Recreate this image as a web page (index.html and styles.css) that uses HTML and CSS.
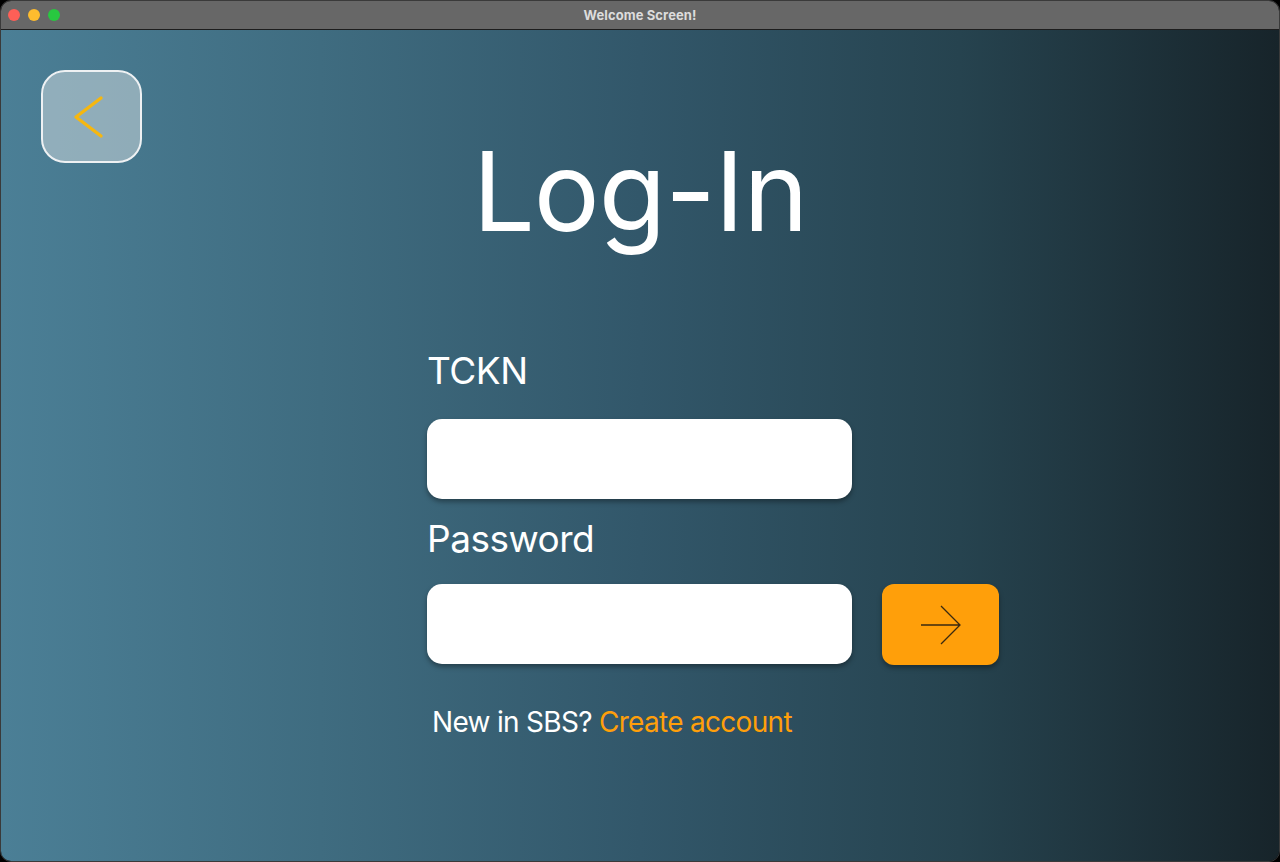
FILE: index.html
```html
<!DOCTYPE html>
<html>
<head>
<meta charset="utf-8">
<title>Welcome Screen!</title>
<link rel="stylesheet" href="styles.css">
</head>
<body>
<div class="window">
  <div class="titlebar">
    <div class="lights">
      <span class="light red"></span>
      <span class="light yellow"></span>
      <span class="light green"></span>
    </div>
    <div class="title">Welcome Screen!</div>
  </div>
  <div class="content">
    <div class="topbar">
      <button class="back" aria-label="Back">
        <svg width="34" height="44" viewBox="0 0 34 44"><polyline points="29,3 4,22 29,41" fill="none" stroke="#f6b70f" stroke-width="3.4" stroke-linecap="round" stroke-linejoin="round"/></svg>
      </button>
    </div>
    <h1 class="heading">Log-In</h1>
    <div class="form">
      <label class="label">TCKN</label>
      <div class="row"><div class="input"></div></div>
      <label class="label label-pw">Password</label>
      <div class="row">
        <div class="input"></div>
        <button class="go" aria-label="Submit">
          <svg width="42" height="40" viewBox="0 0 42 40"><path d="M1 20 H40 M21 1 L40 20 L21 39" fill="none" stroke="#3a2a10" stroke-width="1.3" stroke-linejoin="miter"/></svg>
        </button>
      </div>
      <p class="signup">New in SBS? <span class="link">Create account</span></p>
    </div>
  </div>
</div>
</body>
</html>
```

FILE: styles.css
```css
html, body {
  margin: 0;
  padding: 0;
  background: #000;
  height: 862px;
  overflow: hidden;
}
.window {
  width: 1280px;
  height: 862px;
  border-radius: 11px;
  overflow: hidden;
  display: flex;
  flex-direction: column;
  font-family: Inter, "Liberation Sans", sans-serif;
  box-sizing: border-box;
  border: 1px solid #3a3a3a;
}
.titlebar {
  height: 28px;
  background: #676767;
  position: relative;
  display: flex;
  align-items: center;
  justify-content: center;
  border-bottom: 1px solid #1d1d1d;
  flex-shrink: 0;
}
.lights {
  position: absolute;
  left: 7px;
  top: 8px;
  display: flex;
  gap: 8px;
}
.light {
  width: 12px;
  height: 12px;
  border-radius: 50%;
  display: block;
}
.red { background: #fe5f57; }
.yellow { background: #febc2e; }
.green { background: #28c840; }
.title {
  color: #dcdcdc;
  font-size: 13px;
  font-weight: 700;
  letter-spacing: 0.1px;
}
.content {
  flex: 1;
  background: linear-gradient(90deg, #4b7f96 0%, #3f6c80 25%, #32576a 50%, #26434f 75%, #17242a 100%);
  position: relative;
}
.topbar {
  padding: 40px 0 0 40px;
  height: 92px;
}
.back {
  width: 101px;
  height: 93px;
  box-sizing: border-box;
  border: 2px solid #eef1f3;
  border-radius: 24px;
  background: rgba(210, 220, 225, 0.52);
  display: flex;
  align-items: center;
  justify-content: center;
  padding: 0 6px 0 0;
}
.heading {
  margin: -46px 0 0 0;
  text-align: center;
  color: #fff;
  font-weight: 400;
  font-size: 110px;
  line-height: 150px;
  letter-spacing: -1px;
}
.form {
  width: 580px;
  margin: 81px 0 0 426px;
  display: flex;
  flex-direction: column;
}
.label {
  color: #fff;
  font-size: 37px;
  line-height: 48px;
  height: 48px;
  margin-left: 0;
  letter-spacing: -0.5px;
}
.label-pw {
  margin-top: 16px;
}
.row {
  display: flex;
  gap: 30px;
  margin-top: 24px;
}
.label-pw + .row {
  margin-top: 21px;
}
.input {
  width: 425px;
  height: 80px;
  background: #fff;
  border-radius: 15px;
  box-shadow: 0 3px 5px rgba(0, 0, 0, 0.35);
}
.go {
  width: 117px;
  height: 81px;
  border: none;
  border-radius: 12px;
  background: #ff9f0a;
  box-shadow: 0 3px 5px rgba(0, 0, 0, 0.35);
  display: flex;
  align-items: center;
  justify-content: center;
  padding: 0;
}
.signup {
  margin: 40px 0 0 5px;
  color: #fff;
  font-size: 28px;
  letter-spacing: -0.7px;
}
.link {
  color: #ff9f0a;
}
```
